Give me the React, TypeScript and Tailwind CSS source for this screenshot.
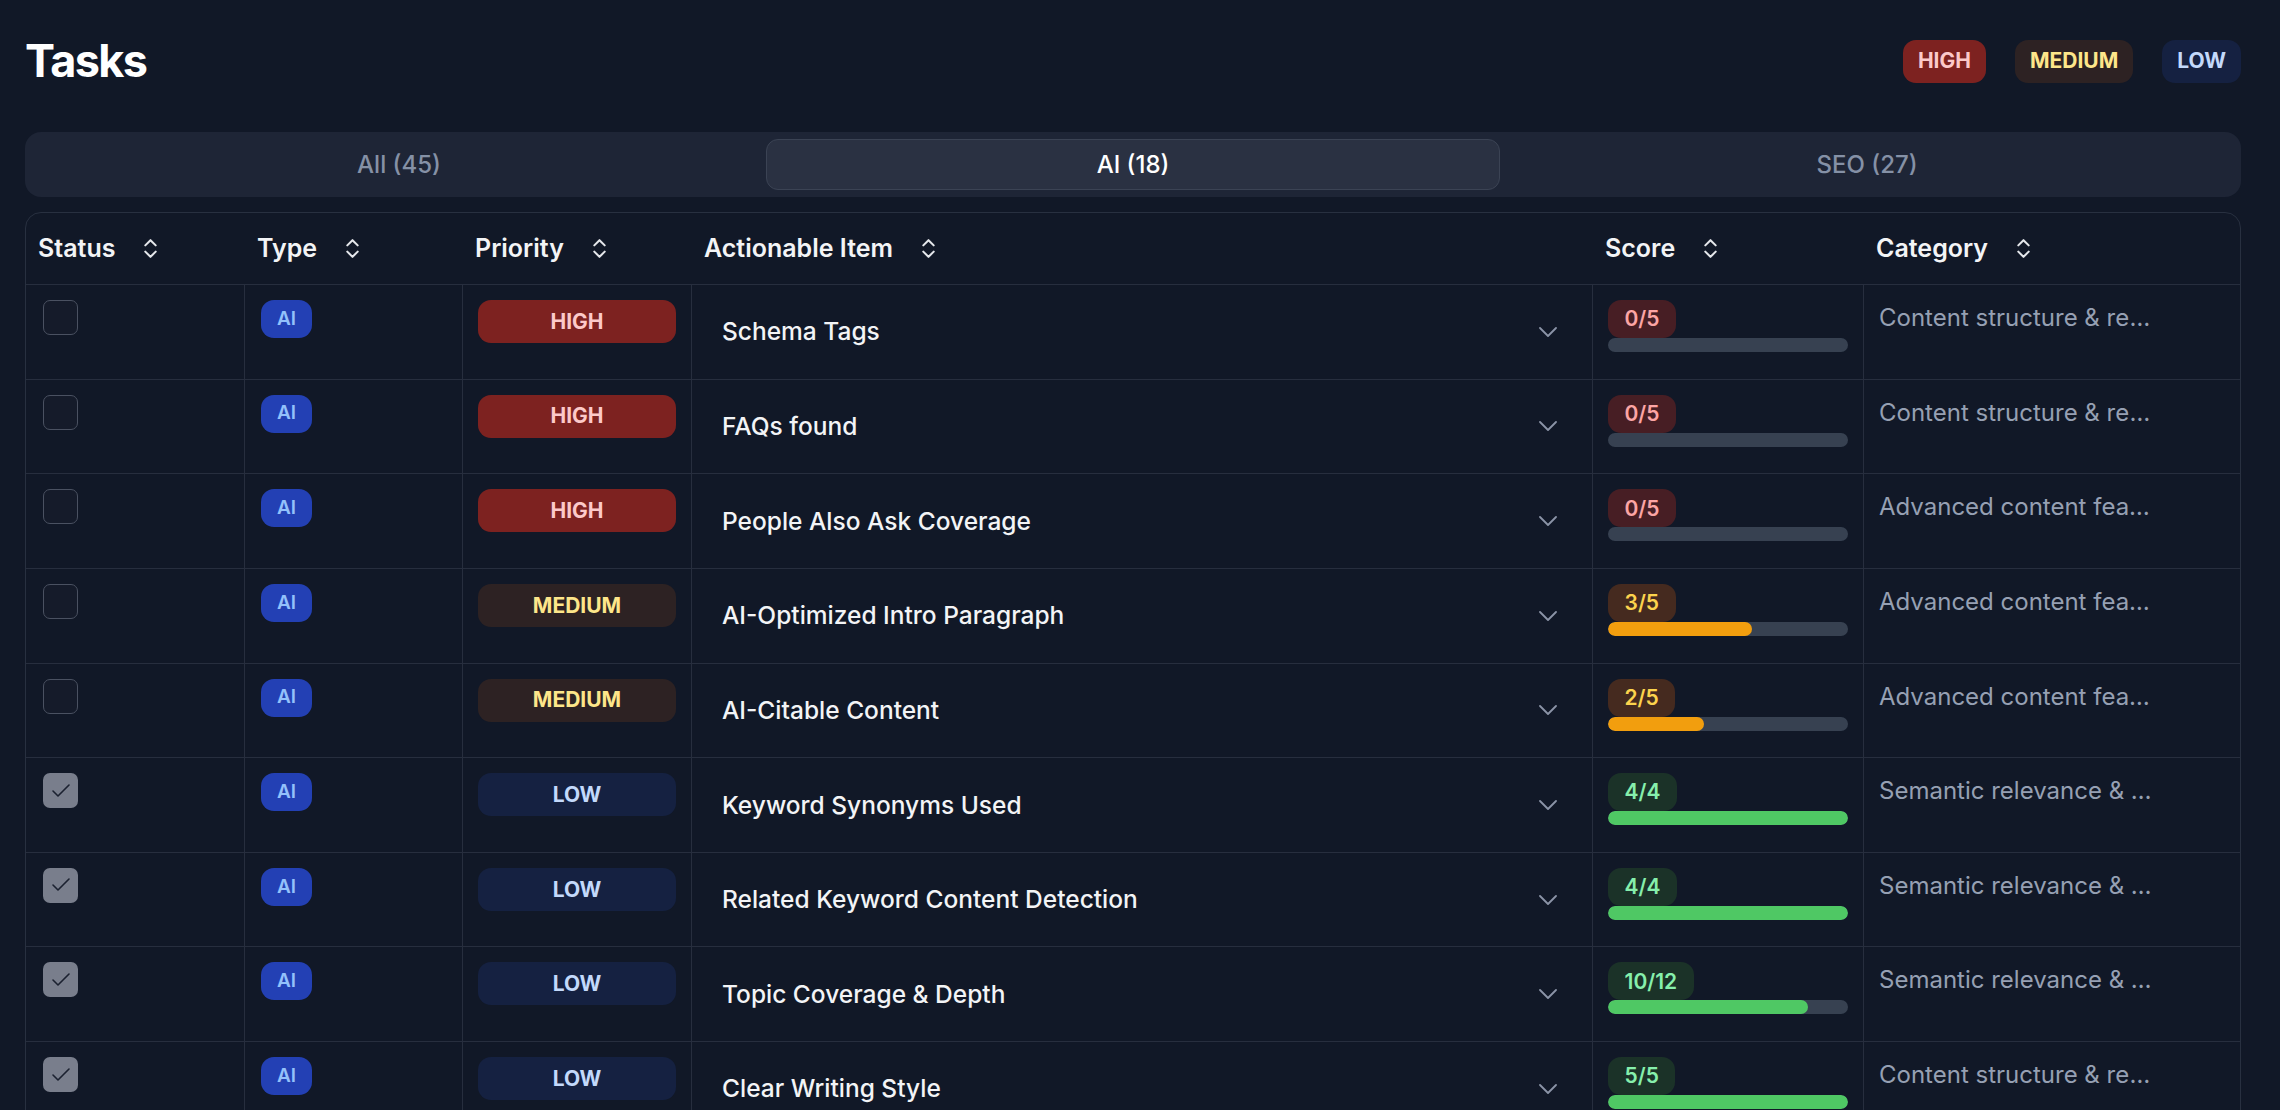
import { Check, ChevronsUpDown } from "lucide-react";

type Priority = "HIGH" | "MEDIUM" | "LOW";

interface Task {
  done: boolean;
  priority: Priority;
  item: string;
  score: number;
  max: number;
  category: string;
}

const tasks: Task[] = [
  { done: false, priority: "HIGH", item: "Schema Tags", score: 0, max: 5, category: "Content structure & readability" },
  { done: false, priority: "HIGH", item: "FAQs found", score: 0, max: 5, category: "Content structure & readability" },
  { done: false, priority: "HIGH", item: "People Also Ask Coverage", score: 0, max: 5, category: "Advanced content features" },
  { done: false, priority: "MEDIUM", item: "AI-Optimized Intro Paragraph", score: 3, max: 5, category: "Advanced content features" },
  { done: false, priority: "MEDIUM", item: "AI-Citable Content", score: 2, max: 5, category: "Advanced content features" },
  { done: true, priority: "LOW", item: "Keyword Synonyms Used", score: 4, max: 4, category: "Semantic relevance & coverage" },
  { done: true, priority: "LOW", item: "Related Keyword Content Detection", score: 4, max: 4, category: "Semantic relevance & coverage" },
  { done: true, priority: "LOW", item: "Topic Coverage & Depth", score: 10, max: 12, category: "Semantic relevance & coverage" },
  { done: true, priority: "LOW", item: "Clear Writing Style", score: 5, max: 5, category: "Content structure & readability" },
];

const priorityStyles: Record<Priority, string> = {
  HIGH: "bg-[#7d2220] text-[#fcc9c9]",
  MEDIUM: "bg-[#2d2223] text-[#fde68a]",
  LOW: "bg-[#152141] text-[#c3d9fb]",
};

// colour of the score pill + bar depends on how close we are to the max
function scoreTone(score: number, max: number) {
  const ratio = score / max;
  if (ratio >= 0.8) return { badge: "bg-[#1b3228] text-[#86efac]", bar: "bg-[#4fc864]" };
  if (ratio > 0) return { badge: "bg-[#452a1f] text-[#fcd34d]", bar: "bg-[#f29e0e]" };
  return { badge: "bg-[#471e24] text-[#fca5a5]", bar: "bg-[#374151]" };
}

const columns = ["Status", "Type", "Priority", "Actionable Item", "Score", "Category"];
const grid = "grid grid-cols-[219px_218px_229px_901px_271px_1fr]";

function PriorityBadge({ level, full = false }: { level: Priority; full?: boolean }) {
  return (
    <span
      className={`flex h-[43px] items-center justify-center rounded-[13px] px-[15px] text-[21px] font-bold ${priorityStyles[level]} ${full ? "w-full" : ""}`}
    >
      {level}
    </span>
  );
}

function TaskRow({ task }: { task: Task }) {
  const tone = scoreTone(task.score, task.max);
  const pct = (task.score / task.max) * 100;

  return (
    <div className={`${grid} h-[94.625px] border-b border-[#272e3e]`}>
      <div className="border-r border-[#272e3e] pl-[17px] pt-[15px]">
        {task.done ? (
          <div className="flex h-[35px] w-[35px] items-center justify-center rounded-[7px] bg-[#797e8c]">
            <Check size={24} strokeWidth={1.6} className="text-[#1b2130]" />
          </div>
        ) : (
          <div className="h-[35px] w-[35px] rounded-[7px] border-[1.5px] border-[#4a5161] bg-[#151b2a]" />
        )}
      </div>

      <div className="border-r border-[#272e3e] pl-[16px] pt-[15px]">
        <span className="inline-flex h-[38px] items-center rounded-[13px] bg-[#2340b4] px-[16px] text-[19px] font-semibold text-[#93c1fb]">
          AI
        </span>
      </div>

      <div className="border-r border-[#272e3e] px-[15px] pt-[15px]">
        <PriorityBadge level={task.priority} full />
      </div>

      <div className="flex items-center justify-between border-r border-[#272e3e] pl-[30px] pr-[35px]">
        <span className="text-[24.5px] font-medium text-[#f3f4f6]">{task.item}</span>
        <svg width="18" height="10" viewBox="0 0 18 10" fill="none" className="text-[#8b94a7]">
          <polyline points="1,1 9,9 17,1" stroke="currentColor" strokeWidth="1.8" strokeLinecap="round" strokeLinejoin="round" />
        </svg>
      </div>

      <div className="border-r border-[#272e3e] px-[15px] pt-[15px]">
        <span className={`inline-flex h-[38px] items-center rounded-[13px] px-[16.5px] text-[21px] font-semibold ${tone.badge}`}>
          {task.score}/{task.max}
        </span>
        <div className="h-[14px] w-full overflow-hidden rounded-full bg-[#374151]">
          <div className={`h-full rounded-full ${tone.bar}`} style={{ width: `${pct}%` }} />
        </div>
      </div>

      <div className="px-[15px] pt-[15px]">
        <p className="w-[276px] truncate text-[24px] leading-[36px] text-[#96a0b3]">{task.category}</p>
      </div>
    </div>
  );
}

export default function App() {
  const tabs = [
    { label: "All (45)", active: false },
    { label: "AI (18)", active: true },
    { label: "SEO (27)", active: false },
  ];

  return (
    <div className="h-screen overflow-hidden bg-[#111827] pl-[25px] pr-[39px] pt-[34px] font-[Inter,sans-serif] text-white">
      <div className="flex items-center justify-between">
        <h1 className="text-[45px] font-bold leading-[54px] tracking-[-0.035em]">Tasks</h1>
        <div className="flex gap-[29px]">
          <PriorityBadge level="HIGH" />
          <PriorityBadge level="MEDIUM" />
          <PriorityBadge level="LOW" />
        </div>
      </div>

      <div className="mt-[44px] grid h-[65px] grid-cols-3 rounded-[16px] bg-[#1e2536] p-[7px]">
        {tabs.map((tab) => (
          <button
            key={tab.label}
            className={`flex h-[51px] items-center justify-center rounded-[12px] border text-[24px] font-medium ${
              tab.active ? "border-[#3b4354] bg-[#2a3142] text-white" : "border-transparent text-[#8591a6]"
            }`}
          >
            {tab.label}
          </button>
        ))}
      </div>

      <div className="mt-[15px] rounded-t-[16px] border border-[#283040]">
        <div className={`${grid} h-[72px] border-b border-[#272e3e]`}>
          {columns.map((col) => (
            <div key={col} className="flex items-center gap-[23px] px-[12px] text-[25px] font-semibold text-[#f3f4f6]">
              <span>{col}</span>
              <ChevronsUpDown size={25} strokeWidth={2} className="text-[#e5e7eb]" />
            </div>
          ))}
        </div>
        {tasks.map((task) => (
          <TaskRow key={task.item} task={task} />
        ))}
      </div>
    </div>
  );
}
